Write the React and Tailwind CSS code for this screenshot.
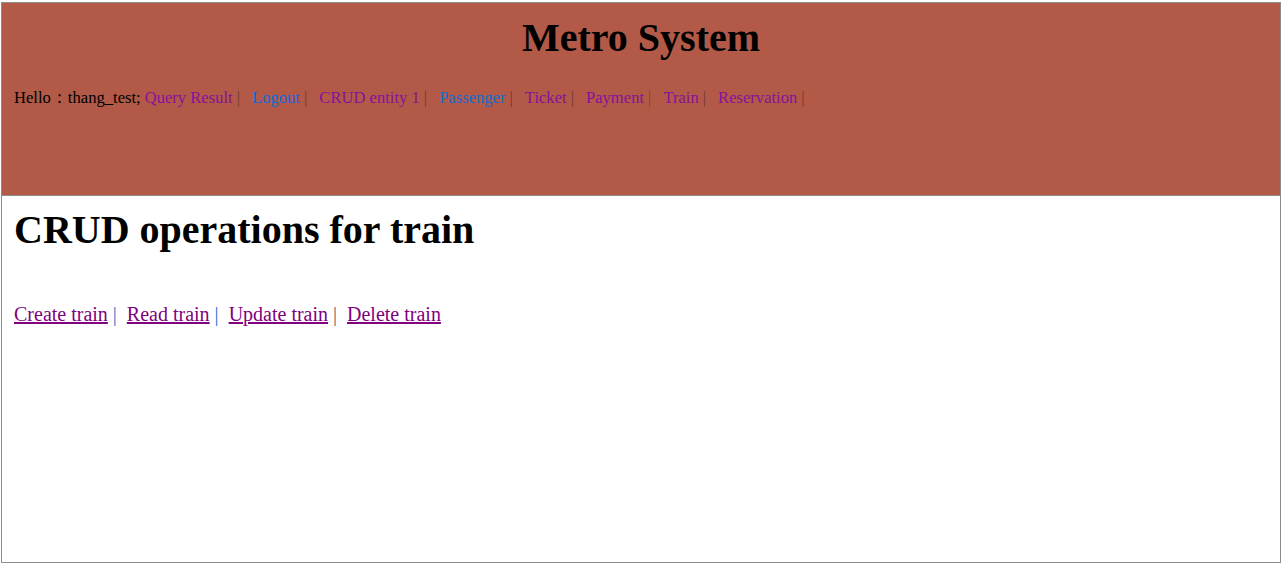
import React from "react";

const navItems = [
  { label: "Query Result", color: "text-[#86119c]", pipe: "text-[#6e3a30]" },
  { label: "Logout", color: "text-[#1469d6]", pipe: "text-[#6e3a30]" },
  { label: "CRUD entity 1", color: "text-[#86119c]", pipe: "text-[#6e3a30]" },
  { label: "Passenger", color: "text-[#1469d6]", pipe: "text-[#5b4040]" },
  { label: "Ticket", color: "text-[#86119c]", pipe: "text-[#6e3a30]" },
  { label: "Payment", color: "text-[#86119c]", pipe: "text-[#9a3a1c]" },
  { label: "Train", color: "text-[#86119c]", pipe: "text-[#6e3a30]" },
  { label: "Reservation", color: "text-[#86119c]", pipe: "text-[#6e3a30]" },
];

const crudLinks = [
  { label: "Create train", pipe: "text-[#1d6fd0]" },
  { label: "Read train", pipe: "text-[#1d6fd0]" },
  { label: "Update train", pipe: "text-[#666666]" },
  { label: "Delete train", pipe: null },
];

export default function App() {
  return (
    <div
      className="min-h-[566px] bg-white pt-[2px] pl-[1px]"
      style={{ fontFamily: "'Liberation Serif', 'Times New Roman', serif" }}
    >
      <div className="w-[1280px] h-[561px] border border-[#8c8c8c] bg-white flex flex-col">
        {/* header */}
        <div className="h-[193px] bg-[#b25a47] border-b border-[#8c8c8c] pt-[12px]">
          <h1 className="text-center text-[40px] leading-[46px] font-bold text-black">
            Metro System
          </h1>
          <div className="mt-[25px] pl-[12px] text-[16.6px] leading-[24px] text-black whitespace-nowrap flex">
            <span>Hello：thang_test;</span>
            {navItems.map((item, i) => (
              <span key={item.label} className={i === 0 ? "ml-[4px]" : "ml-[12px]"}>
                <a href="#" className={item.color}>
                  {item.label}
                </a>
                <span className={`ml-[4px] ${item.pipe}`}>|</span>
              </span>
            ))}
          </div>
        </div>

        {/* content */}
        <div className="pl-[12px] pt-[11px]">
          <h2 className="text-[40px] leading-[46px] font-bold text-black">
            CRUD operations for train
          </h2>
          <div className="mt-[47px] text-[20px] leading-[28px] flex whitespace-nowrap">
            {crudLinks.map((link, i) => (
              <span key={link.label} className={i === 0 ? "" : "ml-[10px]"}>
                <a href="#" className="text-[#800080] underline">
                  {link.label}
                </a>
                {link.pipe && <span className={`ml-[5px] ${link.pipe}`}>|</span>}
              </span>
            ))}
          </div>
        </div>
      </div>
    </div>
  );
}
